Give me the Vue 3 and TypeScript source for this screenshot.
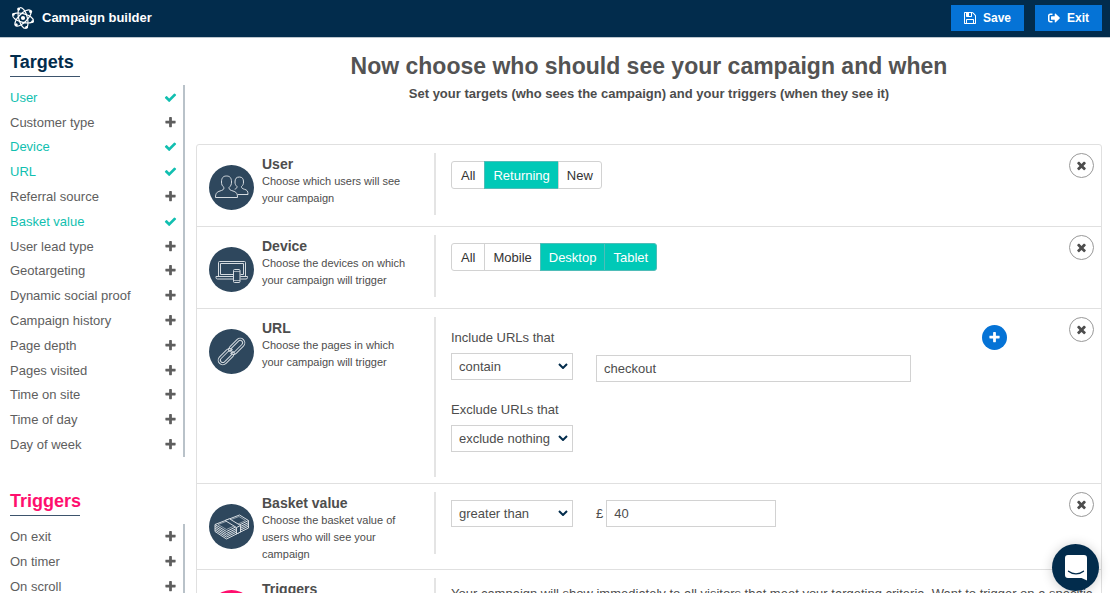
<script setup lang="ts">
import { ref } from 'vue'

interface RuleItem {
  label: string
  active: boolean
}

interface Segment {
  label: string
  on: boolean
}

const PLUS =
  'M1600 736v192q0 40-28 68t-68 28h-416v416q0 40-28 68t-68 28h-192q-40 0-68-28t-28-68v-416h-416q-40 0-68-28t-28-68v-192q0-40 28-68t68-28h416v-416q0-40 28-68t68-28h192q40 0 68 28t28 68v416h416q40 0 68 28t28 68z'
const CHECK =
  'M1671 566q0 40-28 68l-724 724-136 136q-28 28-68 28t-68-28l-136-136-362-362q-28-28-28-68t28-68l136-136q28-28 68-28t68 28l294 295 656-657q28-28 68-28t68 28l136 136q28 28 28 68z'
const TIMES =
  'M1490 1322q0 40-28 68l-136 136q-28 28-68 28t-68-28l-294-294-294 294q-28 28-68 28t-68-28l-136-136q-28-28-28-68t28-68l294-294-294-294q-28-28-28-68t28-68l136-136q28-28 68-28t68 28l294 294 294-294q28-28 68-28t68 28l136 136q28 28 28 68t-28 68l-294 294 294 294q28 28 28 68z'

const item = (label: string, active = false): RuleItem => ({ label, active })

const targets = ref<RuleItem[]>([
  item('User', true),
  item('Customer type'),
  item('Device', true),
  item('URL', true),
  item('Referral source'),
  item('Basket value', true),
  item('User lead type'),
  item('Geotargeting'),
  item('Dynamic social proof'),
  item('Campaign history'),
  item('Page depth'),
  item('Pages visited'),
  item('Time on site'),
  item('Time of day'),
  item('Day of week'),
])

const triggers = ref<RuleItem[]>([item('On exit'), item('On timer'), item('On scroll')])

const userTypes = ref<Segment[]>([
  { label: 'All', on: false },
  { label: 'Returning', on: true },
  { label: 'New', on: false },
])

const devices = ref<Segment[]>([
  { label: 'All', on: false },
  { label: 'Mobile', on: false },
  { label: 'Desktop', on: true },
  { label: 'Tablet', on: true },
])

const includeMode = ref('contain')
const includeUrl = ref('checkout')
const excludeMode = ref('exclude nothing')
const basketMode = ref('greater than')
const basketValue = ref('40')
</script>

<template>
  <div class="app">
    <header class="topbar">
      <svg class="logo" viewBox="0 0 24 24" aria-hidden="true">
        <g fill="none" stroke="#fff" stroke-width="1.2">
          <ellipse cx="12" cy="12" rx="10.6" ry="4.3" transform="rotate(15 12 12)" />
          <ellipse cx="12" cy="12" rx="10.6" ry="4.3" transform="rotate(75 12 12)" />
          <ellipse cx="12" cy="12" rx="10.6" ry="4.3" transform="rotate(135 12 12)" />
        </g>
        <g fill="#fff">
          <circle cx="12" cy="12" r="2.1" />
          <circle cx="7.6" cy="2.9" r="1.5" />
          <circle cx="19.6" cy="5.6" r="1.5" />
          <circle cx="2.4" cy="8.4" r="1.3" />
          <circle cx="21.6" cy="15.6" r="1.3" />
          <circle cx="5.2" cy="18.8" r="1.5" />
          <circle cx="15.6" cy="21.3" r="1.4" />
        </g>
      </svg>
      <span class="brand">Campaign builder</span>
      <button type="button" class="action">
        <svg viewBox="0 128 1536 1536" aria-hidden="true">
          <path
            d="M384 1536h768v-384h-768v384zM1280 1536h128v-896q0-14-10-38.5t-20-34.5l-281-281q-10-10-34-20t-39-10v416q0 40-28 68t-68 28h-576q-40 0-68-28t-28-68v-416h-128v1280h128v-416q0-40 28-68t68-28h832q40 0 68 28t28 68v416zM896 608v-320q0-13-9.5-22.5t-22.5-9.5h-192q-13 0-22.5 9.5t-9.5 22.5v320q0 13 9.5 22.5t22.5 9.5h192q13 0 22.5-9.5t9.5-22.5zM1536 640v928q0 40-28 68t-68 28h-1344q-40 0-68-28t-28-68v-1344q0-40 28-68t68-28h928q40 0 88 20t76 48l280 280q28 28 48 76t20 88z"
          />
        </svg>
        Save
      </button>
      <button type="button" class="action">
        <svg viewBox="0 0 512 512" aria-hidden="true">
          <path
            d="M497 273L329 441c-15 15-41 4.500-41-17v-96H152c-13.300 0-24-10.700-24-24v-96c0-13.300 10.700-24 24-24h136V88c0-21.400 25.900-32 41-17l168 168c9.300 9.400 9.300 24.600 0 34zM192 436v-40c0-6.600-5.400-12-12-12H96c-17.700 0-32-14.300-32-32V160c0-17.700 14.300-32 32-32h84c6.600 0 12-5.400 12-12V76c0-6.600-5.400-12-12-12H96c-53 0-96 43-96 96v192c0 53 43 96 96 96h84c6.600 0 12-5.400 12-12z"
          />
        </svg>
        Exit
      </button>
    </header>

    <div class="body">
      <nav class="sidebar">
        <h2>Targets</h2>
        <ul class="rules targets">
          <li v-for="t in targets" :key="t.label">
            <button type="button" :class="{ active: t.active }" :aria-pressed="t.active" @click="t.active = !t.active">
              {{ t.label }}
              <svg viewBox="0 0 1792 1792" aria-hidden="true"><path :d="t.active ? CHECK : PLUS" /></svg>
            </button>
          </li>
        </ul>
        <h2 class="hot">Triggers</h2>
        <ul class="rules">
          <li v-for="t in triggers" :key="t.label">
            <button type="button" :class="{ active: t.active }" :aria-pressed="t.active" @click="t.active = !t.active">
              {{ t.label }}
              <svg viewBox="0 0 1792 1792" aria-hidden="true"><path :d="t.active ? CHECK : PLUS" /></svg>
            </button>
          </li>
        </ul>
      </nav>

      <main class="content">
        <h1>Now choose who should see your campaign and when</h1>
        <p class="lead">Set your targets (who sees the campaign) and your triggers (when they see it)</p>

        <div class="card">
          <section class="row">
            <svg class="badge" viewBox="0 0 45 45" aria-hidden="true">
              <circle cx="22.5" cy="22.5" r="22.500" fill="#2e475d" />
              <g fill="none" stroke="#d5dbe0" stroke-width="1" stroke-linejoin="round">
                <path d="M6.500 32.500c0-4.500 1.500-5.500 4.500-6.500 2.500-.8 4-1.200 4-3.500-1.800-1.500-2.500-3-2.500-5.500 0-4 1.500-6 5-6s5 2 5 6c0 2.500-.7 4-2.500 5.500 0 2.300 1.500 2.700 4 3.500 3 1 4.500 2 4.500 6.500z" />
                <path d="M28.500 29.500H39c0-3.500-1-4.500-3.500-5.200-2-.6-3-1-3-2.800 1.500-1.200 2-2.500 2-4.500 0-3.300-1.200-5-4.200-5s-4.300 1.700-4.300 5c0 2 .6 3.300 2 4.500 0 1.600-.7 2.200-2.300 2.700" />
              </g>
            </svg>
            <div class="info">
              <h3>User</h3>
              <p>Choose which users will see your campaign</p>
            </div>
            <div class="controls">
              <div class="segments" role="group" aria-label="User">
                <button v-for="s in userTypes" :key="s.label" type="button" :class="{ on: s.on }" :aria-pressed="s.on" @click="s.on = !s.on">{{ s.label }}</button>
              </div>
            </div>
            <button type="button" class="remove" aria-label="Remove user">
              <svg viewBox="0 0 1792 1792" aria-hidden="true"><path :d="TIMES" /></svg>
            </button>
          </section>

          <section class="row">
            <svg class="badge" viewBox="0 0 45 45" aria-hidden="true">
              <circle cx="22.5" cy="22.5" r="22.500" fill="#2e475d" />
              <g fill="none" stroke="#d5dbe0" stroke-width="1">
                <path d="M24.500 29.500H9.500V15.500q0-1 1-1H35.500q1 0 1 1V29.500H31.500" />
                <path d="M24.500 27.500H11.500V16.500H34.500V27.500H31.500" />
                <path d="M24.500 29.500H7v1q0 1.500 1.500 1.500H24.500M31.500 29.500H38.500v1q0 1.500-1.500 1.500H31.500" />
                <rect x="24.500" y="22.500" width="6.500" height="13" rx="1" />
                <path d="M24.500 24.500h6.500M24.500 33.500h6.500" stroke-width=".7" />
              </g>
            </svg>
            <div class="info">
              <h3>Device</h3>
              <p>Choose the devices on which your campaign will trigger</p>
            </div>
            <div class="controls">
              <div class="segments" role="group" aria-label="Device">
                <button v-for="s in devices" :key="s.label" type="button" :class="{ on: s.on }" :aria-pressed="s.on" @click="s.on = !s.on">{{ s.label }}</button>
              </div>
            </div>
            <button type="button" class="remove" aria-label="Remove device">
              <svg viewBox="0 0 1792 1792" aria-hidden="true"><path :d="TIMES" /></svg>
            </button>
          </section>

          <section class="row">
            <svg class="badge" viewBox="0 0 45 45" aria-hidden="true">
              <circle cx="22.5" cy="22.5" r="22.500" fill="#2e475d" />
              <g fill="none" stroke="#d5dbe0" stroke-width="1" stroke-linejoin="round" transform="rotate(-45 22.5 22.5)">
                <path d="M24.500 21.500a4.600 4.600 0 0 0-4.400-3.600H10.200a4.600 4.600 0 0 0 0 9.200H20.100a4.600 4.600 0 0 0 4.100-2.600l-2-1a2.400 2.400 0 0 1-2.100 1.400H10.200a2.400 2.400 0 0 1 0-4.800H20.100a2.400 2.400 0 0 1 2.200 1.800z" />
                <path d="M20.500 23.500a4.600 4.600 0 0 0 4.400 3.600H34.800a4.600 4.600 0 0 0 0-9.200H24.900a4.600 4.600 0 0 0-4.100 2.600l2 1a2.400 2.400 0 0 1 2.100-1.400H34.800a2.400 2.400 0 0 1 0 4.800H24.900a2.400 2.400 0 0 1-2.200-1.800z" />
              </g>
            </svg>
            <div class="info">
              <h3>URL</h3>
              <p>Choose the pages in which your campaign will trigger</p>
            </div>
            <div class="controls urls">
              <div class="field first">
                <label for="include-mode">Include URLs that</label>
                <div class="select">
                  <select id="include-mode" v-model="includeMode">
                    <option>contain</option>
                    <option>do not contain</option>
                  </select>
                  <svg viewBox="0 0 10 6" aria-hidden="true"><path d="M1 1l4 4 4-4" /></svg>
                </div>
              </div>
              <input v-model="includeUrl" class="text url" type="text" aria-label="URL to include" />
              <button type="button" class="add" aria-label="Add URL">
                <svg viewBox="0 0 1792 1792" aria-hidden="true"><path :d="PLUS" /></svg>
              </button>
              <div class="field">
                <label for="exclude-mode">Exclude URLs that</label>
                <div class="select">
                  <select id="exclude-mode" v-model="excludeMode">
                    <option>exclude nothing</option>
                    <option>contain</option>
                  </select>
                  <svg viewBox="0 0 10 6" aria-hidden="true"><path d="M1 1l4 4 4-4" /></svg>
                </div>
              </div>
            </div>
            <button type="button" class="remove" aria-label="Remove URL">
              <svg viewBox="0 0 1792 1792" aria-hidden="true"><path :d="TIMES" /></svg>
            </button>
          </section>

          <section class="row">
            <svg class="badge" viewBox="0 0 45 45" aria-hidden="true">
              <circle cx="22.5" cy="22.5" r="22.500" fill="#2e475d" />
              <g fill="none" stroke="#d5dbe0" stroke-width="1" stroke-linejoin="round">
                <path d="M6 20.500L30.500 11l9 5.500L17.500 27.500z" />
                <path d="M9 20.500L30 12.500l6.500 4-19 9z" stroke-width=".6" />
                <path d="M6 20.500v7L17.500 35l22-11v-7.500" />
                <path d="M6 22.300l11.500 7.200 22-11M6 24.100l11.500 7.200 22-11M6 25.900l11.500 7.200 22-11" />
                <path d="M16 16.500l11.500 7v6.500l4-2v-6.500L20.500 14.800z" fill="#2e475d" />
                <path d="M27.500 23.500l4-2" />
              </g>
            </svg>
            <div class="info">
              <h3>Basket value</h3>
              <p>Choose the basket value of users who will see your campaign</p>
            </div>
            <div class="controls basket">
              <div class="select">
                <select v-model="basketMode" aria-label="Basket comparison">
                  <option>greater than</option>
                  <option>less than</option>
                </select>
                <svg viewBox="0 0 10 6" aria-hidden="true"><path d="M1 1l4 4 4-4" /></svg>
              </div>
              <label class="currency" for="basket-amount">£</label>
              <input id="basket-amount" v-model="basketValue" class="text amount" type="text" />
            </div>
            <button type="button" class="remove" aria-label="Remove basket value">
              <svg viewBox="0 0 1792 1792" aria-hidden="true"><path :d="TIMES" /></svg>
            </button>
          </section>

          <section class="row">
            <svg class="badge" viewBox="0 0 45 45" aria-hidden="true">
              <circle cx="22.5" cy="22.5" r="22.500" fill="#ff0f6e" />
            </svg>
            <div class="info">
              <h3>Triggers</h3>
            </div>
            <div class="controls note">
              <p>Your campaign will show immediately to all visitors that meet your targeting criteria. Want to trigger on a specific</p>
            </div>
          </section>
        </div>
      </main>
    </div>

    <button type="button" class="chat" aria-label="Open chat">
      <svg viewBox="0 0 22 26" aria-hidden="true">
        <path d="M3 0H19a3 3 0 0 1 3 3V25.500L16.500 23H3a3 3 0 0 1-3-3V3a3 3 0 0 1 3-3z" fill="#fff" />
        <path d="M3.500 16.200c4.200 3.500 10.800 3.500 15 0" fill="none" stroke="#022c4c" stroke-width="1.3" stroke-linecap="round" />
      </svg>
    </button>
  </div>
</template>

<style>
html,
body {
  margin: 0;
  background: #fff;
}
</style>

<style scoped>
.app {
  height: 100vh;
  display: flex;
  flex-direction: column;
  overflow: hidden;
  background: #fff;
  color: #4d4d4d;
  font-family: "Liberation Sans", Arial, sans-serif;
  font-size: 13px;
}

.app * {
  box-sizing: border-box;
}

h1,
h2,
h3,
p,
ul {
  margin: 0;
  padding: 0;
}

button,
input,
select {
  margin: 0;
  font: inherit;
  color: inherit;
}

button {
  cursor: pointer;
}

.topbar {
  flex: none;
  display: flex;
  align-items: center;
  height: 38px;
  padding: 0 8px 2px 11px;
  background: #022c4c;
  border-bottom: 1px solid #bcc6ce;
  color: #fff;
}

.logo {
  width: 24px;
  height: 24px;
}

.brand {
  margin-left: 7px;
  margin-right: auto;
  font-weight: 700;
}

.action {
  display: flex;
  align-items: center;
  gap: 7px;
  height: 26px;
  margin-left: 11px;
  padding: 0 13px;
  border: 0;
  background: #0573d6;
  font-size: 12px;
  font-weight: 700;
}

.action svg {
  width: 12px;
  height: 12px;
  fill: #fff;
}

.body {
  flex: 1;
  min-height: 0;
  display: flex;
  gap: 11px;
  padding-right: 8px;
}

.sidebar {
  flex: none;
  width: 185px;
  padding: 12px 0 0 10px;
}

.sidebar h2 {
  width: 70px;
  margin-bottom: 8px;
  padding-bottom: 2px;
  border-bottom: 1px solid #3d546c;
  color: #022c4c;
  font-size: 18px;
  line-height: 24px;
}

.sidebar h2.hot {
  margin-top: 32px;
  color: #ff0f6e;
}

.rules {
  display: grid;
  grid-auto-rows: 25px;
  border-right: 2px solid #b9c2c9;
  list-style: none;
}

.rules.targets {
  height: 372px;
  grid-auto-rows: 1fr;
}

.rules li {
  display: flex;
}

.rules button {
  flex: 1;
  display: flex;
  align-items: center;
  justify-content: space-between;
  padding: 0 6px 0 0;
  border: 0;
  background: none;
  color: #5e5e5e;
  text-align: left;
}

.rules svg {
  width: 13px;
  height: 13px;
  fill: currentColor;
}

.rules button.active {
  color: #11bfb0;
}

.content {
  flex: 1;
  min-width: 0;
  padding-top: 12px;
}

h1 {
  color: #535353;
  font-size: 23px;
  line-height: 32px;
  text-align: center;
}

.lead {
  margin-top: 2px;
  font-size: 13px;
  font-weight: 700;
  line-height: 20px;
  text-align: center;
}

.card {
  margin-top: 40px;
  border: 1px solid #e0e0e0;
  border-radius: 3px;
}

.row {
  display: flex;
  align-items: flex-start;
  min-height: 82px;
  padding: 8px 7px 6px 12px;
  border-bottom: 1px solid #e0e0e0;
}

.badge {
  flex: none;
  width: 45px;
  height: 45px;
  margin-top: 12px;
}

.info {
  flex: none;
  width: 172px;
  padding: 3px 14px 0 8px;
}

.info h3 {
  font-size: 14px;
  line-height: 17px;
}

.info p {
  font-size: 11px;
  line-height: 17px;
}

.controls {
  flex: 1;
  min-width: 0;
  min-height: 62px;
  margin-left: 8px;
  padding: 8px 0 0 15px;
  border-left: 2px solid #e4e4e4;
}

.segments {
  display: inline-flex;
}

.segments button {
  height: 28px;
  margin-left: -1px;
  padding: 0 8px;
  border: 1px solid #d2d2d2;
  background: #fff;
  color: #333;
}

.segments button:first-child {
  margin-left: 0;
  padding: 0 9px;
  border-radius: 3px 0 0 3px;
}

.segments button:last-child {
  border-radius: 0 3px 3px 0;
}

.segments button.on {
  border-color: #4fbdb8;
  background: #00c9b7;
  color: #fff;
}

.remove {
  flex: none;
  display: flex;
  align-items: center;
  justify-content: center;
  width: 25px;
  height: 25px;
  padding: 0;
  border: 1px solid #999;
  border-radius: 50%;
  background: #fff;
}

.remove svg {
  width: 13px;
  height: 13px;
  fill: #4d4d4d;
}

.urls {
  display: grid;
  grid-template-columns: 122px 1fr 25px;
  align-content: start;
  align-items: start;
  column-gap: 23px;
  row-gap: 19px;
  min-height: 160px;
  padding-right: 62px;
}

.field.first {
  padding-top: 4px;
}

.field label {
  display: block;
  margin-bottom: 6px;
  line-height: 18px;
}

.select {
  position: relative;
  width: 122px;
}

.select select {
  display: block;
  width: 100%;
  height: 27px;
  padding: 0 20px 0 7px;
  border: 1px solid #d2d2d2;
  border-radius: 0;
  background: #fff;
  appearance: none;
}

.select svg {
  position: absolute;
  top: 10px;
  right: 5px;
  width: 10px;
  height: 6px;
  fill: none;
  stroke: #022c4c;
  stroke-width: 2;
  pointer-events: none;
}

.text {
  height: 27px;
  padding: 0 7px;
  border: 1px solid #d2d2d2;
  border-radius: 0;
  background: #fff;
}

.url {
  width: calc(100% - 48px);
  margin-top: 30px;
}

.add {
  display: flex;
  align-items: center;
  justify-content: center;
  width: 25px;
  height: 25px;
  padding: 0;
  border: 0;
  border-radius: 50%;
  background: #0573d6;
}

.add svg {
  width: 13px;
  height: 13px;
  fill: #fff;
}

.basket {
  display: flex;
  align-items: flex-start;
}

.currency {
  margin-left: 23px;
  line-height: 27px;
}

.amount {
  width: 170px;
  margin-left: 3px;
}

.note p {
  line-height: 16px;
  white-space: nowrap;
}

.chat {
  position: fixed;
  right: 11px;
  bottom: 2px;
  display: flex;
  align-items: center;
  justify-content: center;
  width: 47px;
  height: 47px;
  padding: 0;
  border: 0;
  border-radius: 50%;
  background: #022c4c;
  box-shadow: 0 1px 12px rgba(0, 0, 0, 0.2);
}

.chat svg {
  width: 22px;
  height: 26px;
}
</style>
